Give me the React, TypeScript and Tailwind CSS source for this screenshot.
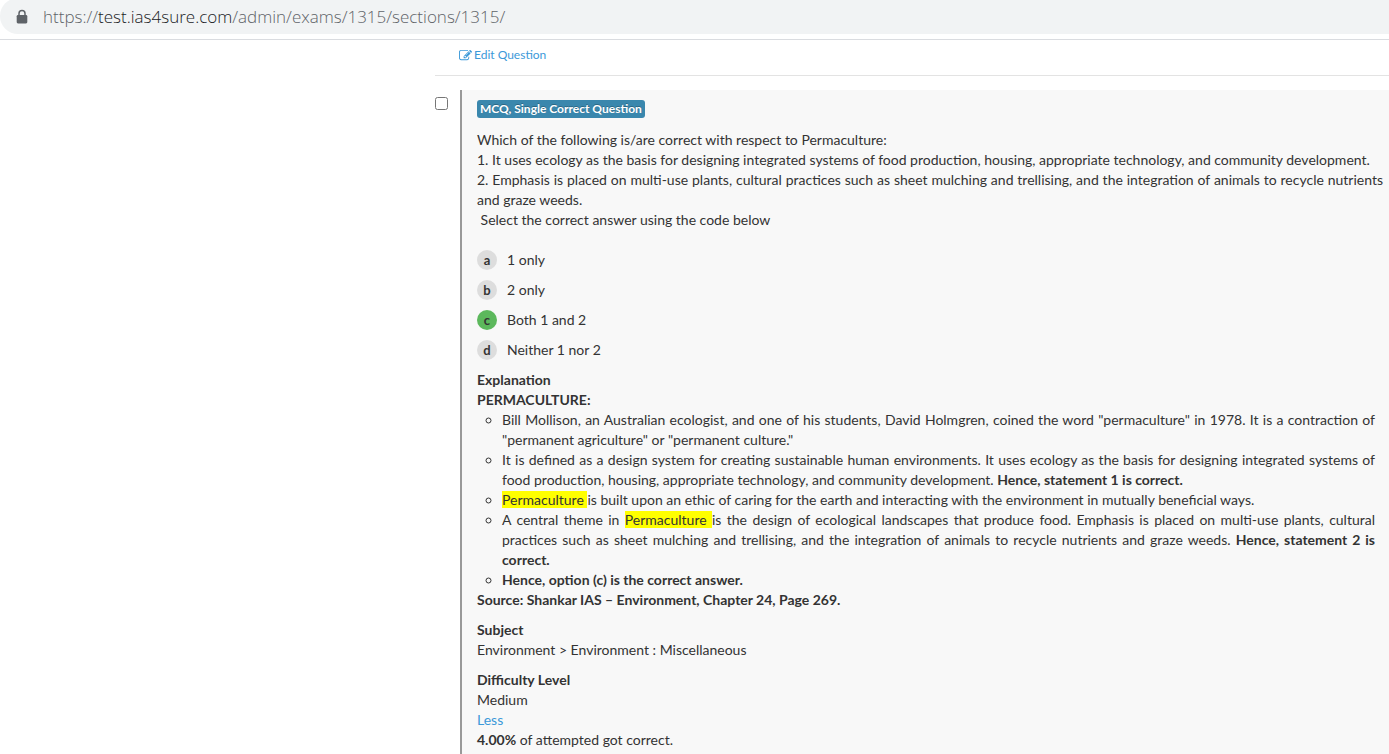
import type { ReactNode } from "react";

const options = [
  { letter: "a", text: "1 only", correct: false },
  { letter: "b", text: "2 only", correct: false },
  { letter: "c", text: "Both 1 and 2", correct: true },
  { letter: "d", text: "Neither 1 nor 2", correct: false },
];

function AddressBar() {
  return (
    <header className="border-b border-[#dadce0] bg-white pb-[5px]">
      <div className="-mt-0.5 flex h-9 items-center gap-[15px] rounded-l-full bg-[#f1f3f4] pl-4 pt-0.5">
        <svg className="h-4 w-3" viewBox="0 0 12 16" aria-hidden="true">
          <path d="M3 7V4.5a3 3 0 0 1 6 0V7" fill="none" stroke="#5f6368" strokeWidth="1.5" />
          <rect x="0.7" y="6" width="10.6" height="8.4" rx="1.3" fill="#5f6368" />
        </svg>
        <p className="font-['Open_Sans','Noto_Sans',sans-serif] text-[17px] leading-6 font-light text-[#5f6368]">
          https://<span className="text-[#202124]">test.ias4sure.com</span>/admin/exams/1315/sections/1315/
        </p>
      </div>
    </header>
  );
}

function EditIcon() {
  return (
    <svg className="size-[13px]" viewBox="0 0 1792 1792" fill="currentColor" aria-hidden="true">
      <path d="M888 1184l116-116-152-152-116 116v56h96v96h56zm440-720q-16-16-33 1l-350 350q-17 17-1 33t33-1l350-350q17-17 1-33zm80 594v190q0 119-84.5 203.5t-203.5 84.5h-832q-119 0-203.5-84.5t-84.5-203.5v-832q0-119 84.5-203.5t203.5-84.5h832q63 0 117 25 15 7 18 23 3 17-9 29l-49 49q-14 14-32 8-23-6-45-6h-832q-66 0-113 47t-47 113v832q0 66 47 113t113 47h832q66 0 113-47t47-113v-126q0-13 9-22l64-64q15-15 35-7t20 29zm-96-738l288 288-672 672h-288v-288zm444 132l-92 92-288-288 92-92q28-28 68-28t68 28l152 152q28 28 28 68t-28 68z" />
    </svg>
  );
}

function Mark({ children }: { children: ReactNode }) {
  return <mark className="bg-[#ffff00] text-inherit">{children}</mark>;
}

function Option({ letter, text, correct }: { letter: string; text: string; correct: boolean }) {
  return (
    <li className="flex gap-2.5">
      <span
        className={
          correct
            ? "size-5 rounded-full bg-[#5cb85c] text-center text-[13px] leading-5 font-bold"
            : "size-5 rounded-full bg-[#dddddd] text-center text-[13px] leading-5 font-bold"
        }
      >
        {letter}
      </span>
      <span>{text}</span>
    </li>
  );
}

function Explanation() {
  return (
    <section>
      <h2 className="font-bold">Explanation</h2>
      <p className="font-bold">PERMACULTURE:</p>
      <ul className="list-[circle] pl-[25px] text-justify">
        <li>
          Bill Mollison, an Australian ecologist, and one of his students, David Holmgren, coined the word
          "permaculture" in 1978. It is a contraction of "permanent agriculture" or "permanent culture."
        </li>
        <li>
          It is defined as a design system for creating sustainable human environments. It uses ecology as the
          basis for designing integrated systems of food production, housing, appropriate technology, and
          community development. <strong>Hence, statement 1 is correct.</strong>
        </li>
        <li>
          <Mark>Permaculture </Mark>is built upon an ethic of caring for the earth and interacting with the
          environment in mutually beneficial ways.
        </li>
        <li>
          A central theme in <Mark>Permaculture </Mark>is the design of ecological landscapes that produce food.
          Emphasis is placed on multi-use plants, cultural practices such as sheet mulching and trellising, and
          the integration of animals to recycle nutrients and graze weeds.{" "}
          <strong>Hence, statement 2 is correct.</strong>
        </li>
        <li>
          <strong>Hence, option (c) is the correct answer.</strong>
        </li>
      </ul>
      <p className="font-bold">Source: Shankar IAS – Environment, Chapter 24, Page 269.</p>
    </section>
  );
}

export default function App() {
  return (
    <div className="flex min-h-screen flex-col overflow-hidden bg-white font-['Lato',sans-serif] text-sm leading-5 text-[#333333]">
      <AddressBar />
      <main className="ml-[435px] flex flex-1 flex-col">
        <div className="border-b border-[#e3e3e3] pt-[5px] pb-2.5 pl-6">
          <a href="#edit" className="flex w-fit items-center gap-0.5 text-xs leading-5 text-[#3b99d9]">
            <EditIcon />
            Edit Question
          </a>
        </div>
        <div className="mt-3.5 flex flex-1">
          <input
            type="checkbox"
            aria-label="Select question"
            className="mt-[7px] mr-3 size-[13px] shrink-0"
          />
          <article className="flex-1 border-l-2 border-[#999999] bg-[#f8f8f8] pt-2.5 pr-3.5 pb-1 pl-[15px]">
            <span className="block w-fit rounded-[3px] bg-[#3a87ad] px-[3px] text-xs leading-[18px] font-bold text-white [text-shadow:0_-1px_0_rgba(0,0,0,0.25)]">
              MCQ, Single Correct Question
            </span>
            <div className="mt-3 -mr-2 text-justify">
              <p>Which of the following is/are correct with respect to Permaculture:</p>
              <p>
                1. It uses ecology as the basis for designing integrated systems of food production, housing,
                appropriate technology, and community development.
              </p>
              <p>
                2. Emphasis is placed on multi-use plants, cultural practices such as sheet mulching and
                trellising, and the integration of animals to recycle nutrients and graze weeds.
              </p>
              <p>&nbsp;Select the correct answer using the code below</p>
            </div>
            <ol className="mt-5 mb-2.5 flex flex-col gap-2.5">
              {options.map((option) => (
                <Option key={option.letter} {...option} />
              ))}
            </ol>
            <Explanation />
            <section className="mt-2.5">
              <h2 className="font-bold">Subject</h2>
              <p>Environment &gt; Environment : Miscellaneous</p>
            </section>
            <section className="mt-2.5">
              <h2 className="font-bold">Difficulty Level</h2>
              <p>Medium</p>
            </section>
            <button type="button" className="block text-[#3b99d9]">
              Less
            </button>
            <p>
              <strong>4.00%</strong> of attempted got correct.
            </p>
          </article>
        </div>
      </main>
    </div>
  );
}
